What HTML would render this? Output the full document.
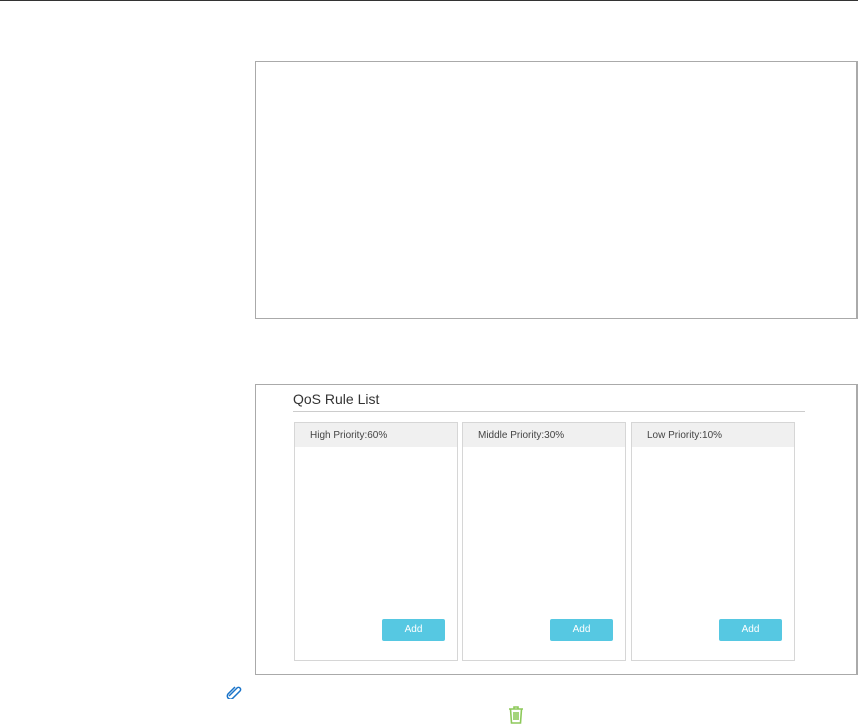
<!DOCTYPE html>
<html><head><style>
body{margin:0;width:858px;height:727px;background:#fff;position:relative;font-family:"Liberation Sans",sans-serif;overflow:hidden}
.a{position:absolute;box-sizing:border-box}
.col{border:1px solid #d6d6d6;top:422px;height:239px;width:164px}
.hd{position:absolute;left:0;right:0;top:0;height:24px;background:#f0f0f0;font-size:10px;color:#444;line-height:25px;padding-left:15px}
.btn{position:absolute;top:196px;width:63px;height:22px;background:#56c8e2;border-radius:2px;color:#fff;font-size:10px;text-align:center;line-height:22px}
</style></head><body>
<div class="a" style="left:0;top:0;width:858px;height:1px;background:#333"></div>
<div class="a" style="left:255px;top:61px;width:603px;height:258px;border:1px solid #aaa;border-right-width:2px"></div>
<div class="a" style="left:255px;top:384px;width:603px;height:291px;border:1px solid #aaa;border-right-width:2px"></div>
<div class="a" style="left:293px;top:391px;font-size:14px;color:#333">QoS Rule List</div>
<div class="a" style="left:293px;top:411px;width:512px;height:1px;background:#ccc"></div>
<div class="a col" style="left:294px"><div class="hd">High Priority:60%</div><div class="btn" style="left:87px">Add</div></div>
<div class="a col" style="left:462px"><div class="hd">Middle Priority:30%</div><div class="btn" style="left:87px">Add</div></div>
<div class="a col" style="left:631px"><div class="hd">Low Priority:10%</div><div class="btn" style="left:87px">Add</div></div>
<svg class="a" style="left:226px;top:685px" width="16" height="14" viewBox="0 0 16 14"><path d="M3 11 L11 3 A2 2 0 0 1 14 6 L7 13 A3 3 0 0 1 2 9 L9 2" fill="none" stroke="#1a74c9" stroke-width="1.5"/></svg>
<svg class="a" style="left:507px;top:705px" width="18" height="19" viewBox="0 0 18 19"><path d="M2 4H16M7 4V2H11V4M3.5 4L4.5 18H13.5L14.5 4M7 7V15M9 7V15M11 7V15" fill="none" stroke="#8dc95a" stroke-width="1.6"/></svg>
</body></html>
